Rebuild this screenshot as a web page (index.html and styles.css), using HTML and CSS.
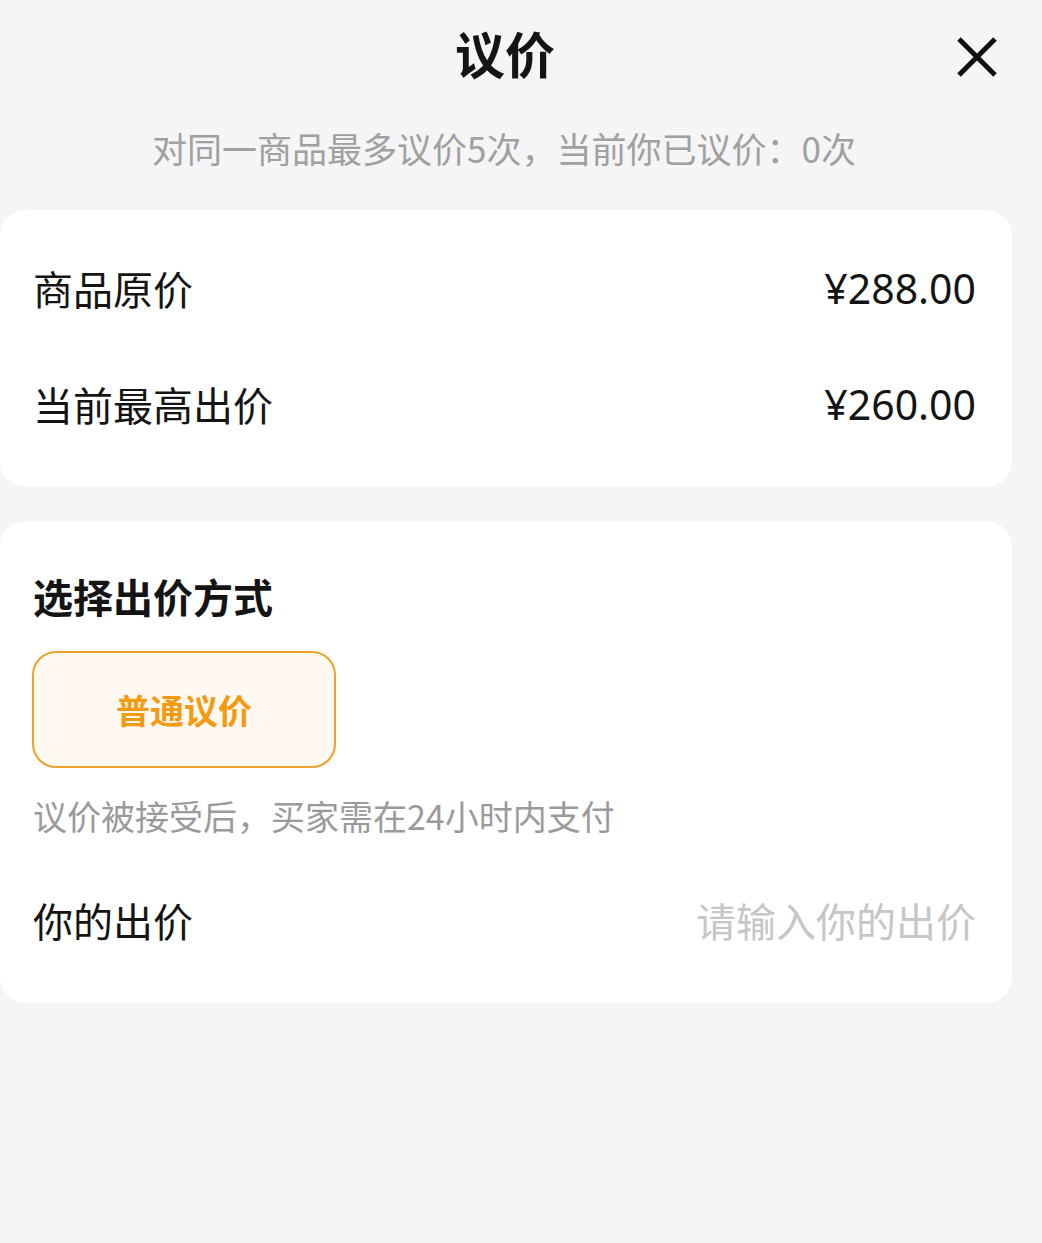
FILE: index.html
```html
<!DOCTYPE html>
<html>
<head>
    <title>议价</title>
    <meta name="viewport" content="width=device-width, initial-scale=1">
    <link rel="stylesheet" href="styles.css">
</head>
<body>
    <div class="header">
        <h1>议价</h1>
        <svg class="close" viewBox="0 0 40 40" width="40" height="40">
            <path d="M2 2 L38 38 M38 2 L2 38" stroke="#111" stroke-width="5" fill="none"/>
        </svg>
    </div>
    <p class="limit">对同一商品最多议价5次，当前你已议价：0次</p>

    <div class="card prices">
        <div class="row">
            <span>商品原价</span>
            <span class="price">¥288.00</span>
        </div>
        <div class="row">
            <span>当前最高出价</span>
            <span class="price">¥260.00</span>
        </div>
    </div>

    <div class="card offer">
        <h2>选择出价方式</h2>
        <div class="mode">普通议价</div>
        <p class="note">议价被接受后，买家需在24小时内支付</p>
        <div class="row">
            <span>你的出价</span>
            <span class="placeholder">请输入你的出价</span>
        </div>
    </div>
</body>
</html>
```

FILE: styles.css
```css
body { font-family: 'Noto Sans CJK SC', 'Noto Sans', sans-serif; margin: 0; background: #f5f5f7; color: #141414; }
.header { position: relative; height: 112px; display: flex; justify-content: center; align-items: center; }
h1 { font-size: 50px; font-weight: 700; margin: 0 32px 8px 0; line-height: 1; }
.close { position: absolute; left: 957px; top: 37px; }
.limit { text-align: center; color: #a0a0a0; font-size: 35px; margin: 0 0 26px 0; line-height: 72px; padding-right: 34px; }
.card { background: #fff; border-radius: 26px; margin: 0 30px 0 0; padding: 0 36px 0 33px; }
.prices { padding-top: 21px; padding-bottom: 24px; margin-bottom: 34px; }
.row { display: flex; justify-content: space-between; align-items: center; height: 116px; font-size: 40px; }
.row span { margin-bottom: 3px; }
.price { font-family: 'Noto Sans', sans-serif; font-size: 41px; }
.offer { padding-top: 44px; padding-bottom: 9px; }
h2 { font-size: 40px; font-weight: 700; margin: 0 0 24px 0; line-height: 62px; }
.mode { width: 304px; height: 117px; box-sizing: border-box; border: 2px solid #eea02a; border-radius: 24px; background: #fff9f2; color: #f29a12; font-size: 34px; font-weight: 700; display: flex; justify-content: center; align-items: center; margin-left: -1px; }
.note { color: #9a9a9a; font-size: 34px; margin: 16px 0 0 0; line-height: 64px; }
.offer .row { height: 146px; }
.placeholder { color: #c6c6c6; }
```
